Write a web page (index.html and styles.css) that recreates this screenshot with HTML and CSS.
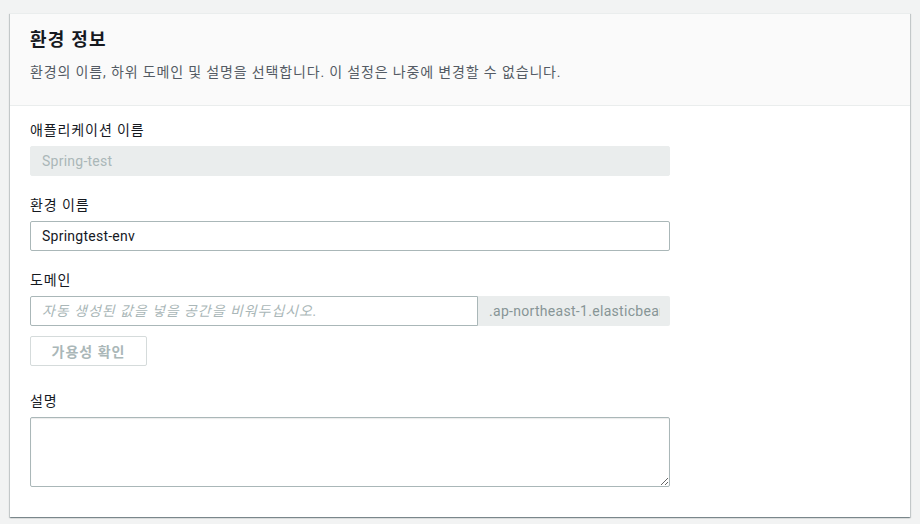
FILE: index.html
```html
<!DOCTYPE html>
<html lang="ko">
<head>
  <meta charset="UTF-8">
  <meta name="viewport" content="width=device-width, initial-scale=1.0">
  <title>환경 정보</title>
  <link rel="stylesheet" href="styles.css">
</head>
<body>
  <section class="panel">
    <div class="panel-header">
      <h2>환경 정보</h2>
      <p>환경의 이름, 하위 도메인 및 설명을 선택합니다. 이 설정은 나중에 변경할 수 없습니다.</p>
    </div>

    <form class="panel-body" id="envForm">
      <div class="field">
        <label for="appName">애플리케이션 이름</label>
        <input type="text" id="appName" value="Spring-test" disabled>
      </div>

      <div class="field">
        <label for="envName">환경 이름</label>
        <input type="text" id="envName" value="Springtest-env">
      </div>

      <div class="field domain">
        <label for="domain">도메인</label>
        <div class="domain-row">
          <input type="text" id="domain" placeholder="자동 생성된 값을 넣을 공간을 비워두십시오.">
          <span class="suffix"><span class="suffix-text">.ap-northeast-1.elasticbeanstalk.com</span></span>
        </div>
        <button type="button" class="check" disabled>가용성 확인</button>
      </div>

      <div class="field">
        <label for="desc">설명</label>
        <textarea id="desc"></textarea>
      </div>
    </form>
  </section>
</body>
</html>
```

FILE: styles.css
```css
body {
  margin: 0;
  padding: 13px 10px 7px;
  background: #f2f3f3;
  font-family: Roboto, "Noto Sans CJK KR", sans-serif;
  color: #16191f;
}
.panel {
  background: #fff;
  border-top: 1px solid #eaeded;
  box-shadow: 0 1px 1px 0 rgba(0, 28, 36, 0.3), 1px 1px 1px 0 rgba(0, 28, 36, 0.15), -1px 1px 1px 0 rgba(0, 28, 36, 0.15);
}
.panel-header {
  background: #fafafa;
  border-bottom: 1px solid #eaeded;
  padding: 15px 20px 22px;
}
.panel-header h2 {
  margin: 0;
  font-size: 18px;
  line-height: 22px;
  font-weight: 700;
  letter-spacing: 1.2px;
}
.panel-header p {
  margin: 10px 0 0;
  font-size: 14px;
  line-height: 22px;
  color: #545b64;
  letter-spacing: 0.85px;
}
.panel-body {
  padding: 14px 20px 30px;
}
.field {
  width: 640px;
  margin-bottom: 19px;
}
.field:last-child {
  margin-bottom: 0;
}
.field.domain {
  margin-bottom: 25px;
}
label {
  display: block;
  font-size: 14px;
  line-height: 20px;
  margin-bottom: 6px;
  letter-spacing: 0.9px;
}
input, textarea {
  display: block;
  width: 100%;
  box-sizing: border-box;
  height: 30px;
  padding: 0 11px;
  border: 1px solid #aab7b8;
  border-radius: 2px;
  font-family: Roboto, "Noto Sans CJK KR", sans-serif;
  font-size: 14px;
  letter-spacing: 0.25px;
  color: #16191f;
  background: #fff;
  outline: none;
}
input:disabled {
  background: #eaeded;
  border-color: #eaeded;
  color: #aab7b8;
}
input::placeholder {
  font-style: italic;
  letter-spacing: 0.95px;
  color: #aab7b8;
}
.domain-row {
  display: flex;
}
.domain-row input {
  flex: 1;
  border-radius: 2px 0 0 2px;
}
.suffix {
  width: 192px;
  flex: none;
  box-sizing: border-box;
  height: 30px;
  padding: 0 10px 0 11px;
  background: #eaeded;
  border-radius: 0 2px 2px 0;
}
.suffix-text {
  display: block;
  line-height: 30px;
  font-size: 14px;
  letter-spacing: 0.3px;
  color: #879596;
  white-space: nowrap;
  overflow: hidden;
}
.check {
  margin-top: 10px;
  width: 117px;
  height: 30px;
  background: #fff;
  border: 1px solid #d5dbdb;
  border-radius: 2px;
  font-family: Roboto, "Noto Sans CJK KR", sans-serif;
  font-size: 14px;
  font-weight: 700;
  letter-spacing: 1px;
  color: #aab7b8;
}
textarea {
  height: 70px;
  padding: 4px 11px;
  box-shadow: inset 0 1px 1px rgba(0, 0, 0, 0.08);
}
```
